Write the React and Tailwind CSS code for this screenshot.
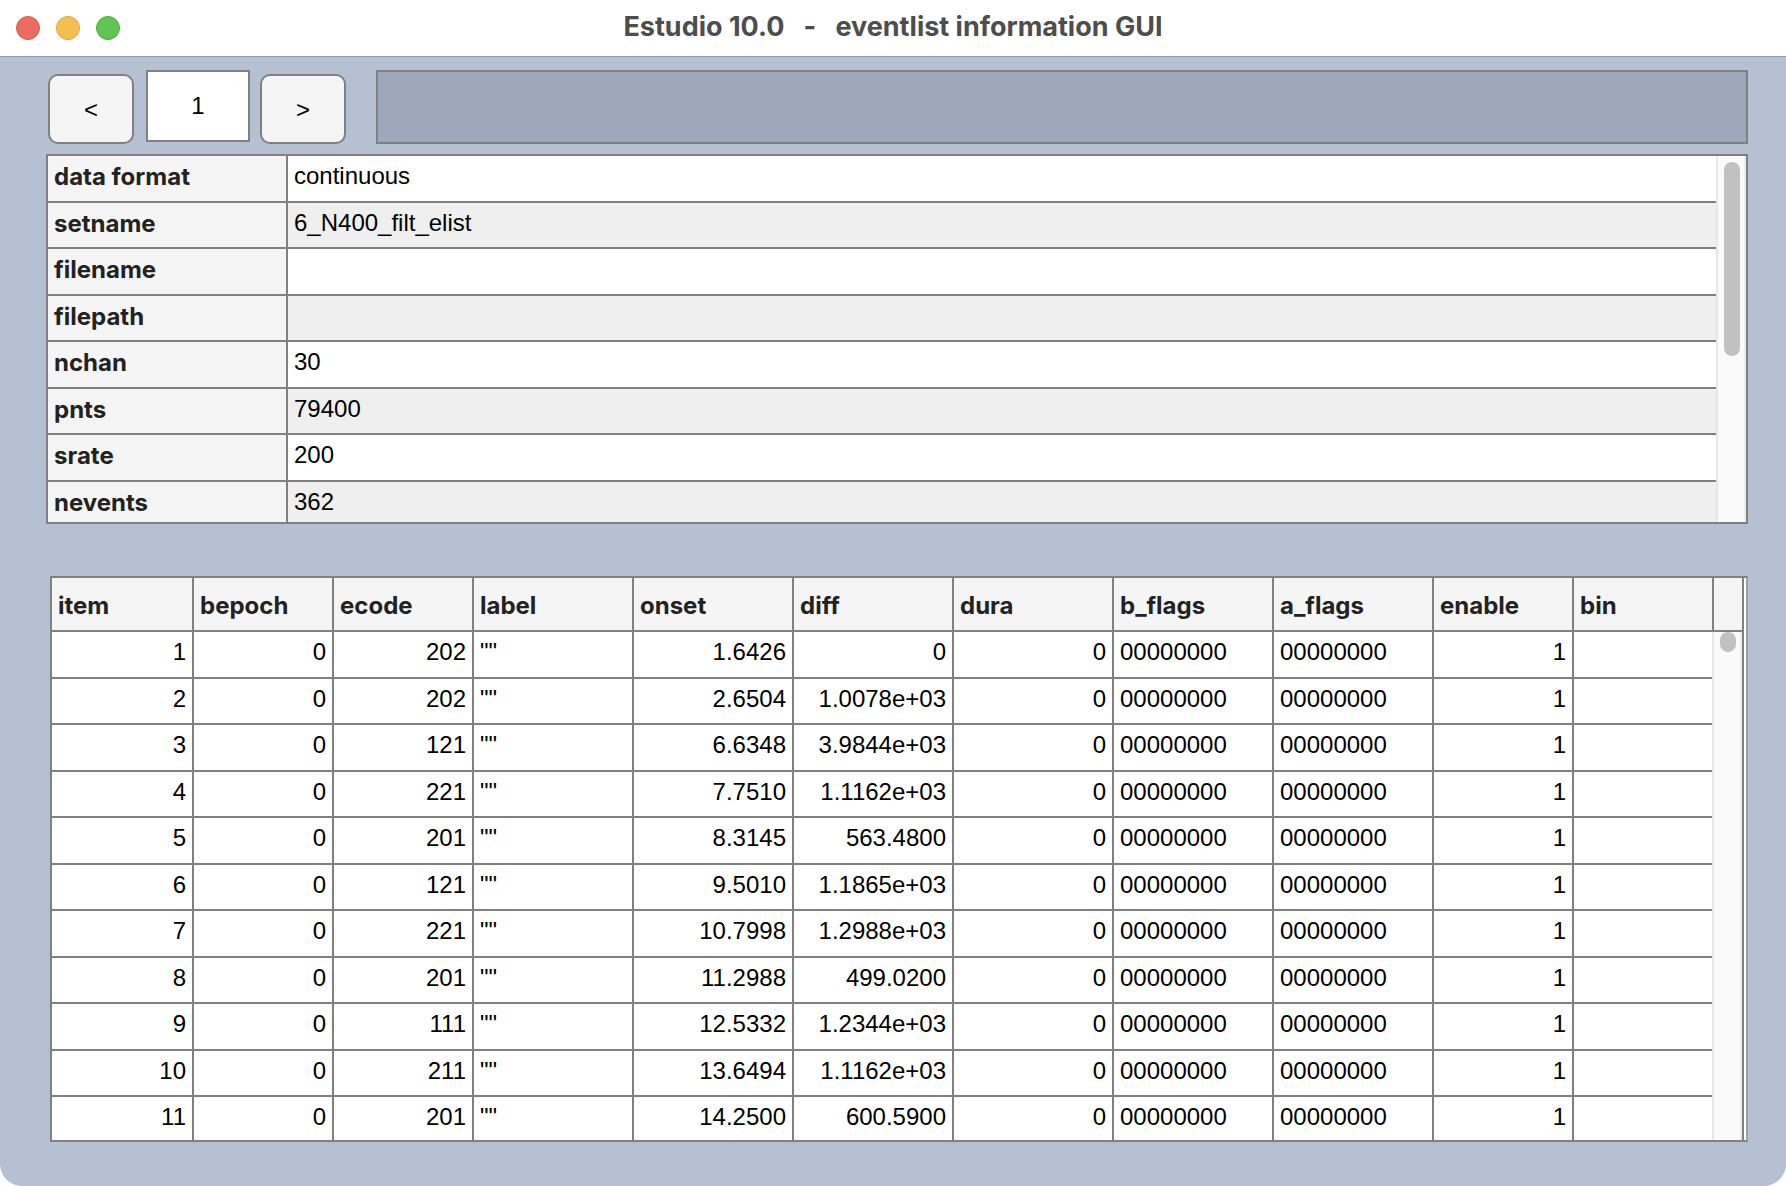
import { useState } from 'react';

const info = [
  ['data format', 'continuous'],
  ['setname', '6_N400_filt_elist'],
  ['filename', ''],
  ['filepath', ''],
  ['nchan', '30'],
  ['pnts', '79400'],
  ['srate', '200'],
  ['nevents', '362'],
];

const columns = [
  { name: 'item', col: 'w-[142px]', align: 'text-right' },
  { name: 'bepoch', col: 'w-[140px]', align: 'text-right' },
  { name: 'ecode', col: 'w-[140px]', align: 'text-right' },
  { name: 'label', col: 'w-[160px]', align: 'text-left' },
  { name: 'onset', col: 'w-[160px]', align: 'text-right' },
  { name: 'diff', col: 'w-[160px]', align: 'text-right' },
  { name: 'dura', col: 'w-[160px]', align: 'text-right' },
  { name: 'b_flags', col: 'w-[160px]', align: 'text-left' },
  { name: 'a_flags', col: 'w-[160px]', align: 'text-left' },
  { name: 'enable', col: 'w-[140px]', align: 'text-right' },
  { name: 'bin', col: '', align: 'text-left' },
];

const events = [
  ['202', '1.6426', '0'],
  ['202', '2.6504', '1.0078e+03'],
  ['121', '6.6348', '3.9844e+03'],
  ['221', '7.7510', '1.1162e+03'],
  ['201', '8.3145', '563.4800'],
  ['121', '9.5010', '1.1865e+03'],
  ['221', '10.7998', '1.2988e+03'],
  ['201', '11.2988', '499.0200'],
  ['111', '12.5332', '1.2344e+03'],
  ['211', '13.6494', '1.1162e+03'],
  ['201', '14.2500', '600.5900'],
].map(([ecode, onset, diff], i) => [
  String(i + 1), '0', ecode, '""', onset, diff, '0', '00000000', '00000000', '1', '',
]);

function TitleBar() {
  return (
    <header className="grid h-14 shrink-0 grid-cols-[1fr_auto_1fr] items-center bg-white px-4">
      <div className="flex gap-4">
        <span className="size-6 rounded-full border border-[#d65a4e] bg-[#ec6b60]" />
        <span className="size-6 rounded-full border border-[#dca443] bg-[#f5bf4f]" />
        <span className="size-6 rounded-full border border-[#52a842] bg-[#61c554]" />
      </div>
      <h1 className="whitespace-pre pb-0.5 font-['Inter',sans-serif] text-[27px] leading-8 font-bold text-[#4d4d4d]">
        Estudio 10.0   -   eventlist information GUI
      </h1>
    </header>
  );
}

function StepButton({ label, onClick, children }) {
  return (
    <button
      type="button"
      aria-label={label}
      onClick={onClick}
      className="mt-1 h-[70px] w-[86px] rounded-[10px] border-2 border-[#808080] bg-[#f5f5f5] pt-0.5"
    >
      {children}
    </button>
  );
}

function Toolbar() {
  const [set, setSet] = useState(1);

  return (
    <div className="flex h-[74px] shrink-0 items-start pl-0.5">
      <StepButton label="Previous" onClick={() => setSet(Math.max(1, set - 1))}>
        &lt;
      </StepButton>
      <input
        type="text"
        aria-label="Set"
        value={set}
        onChange={(e) => setSet(Number(e.target.value) || 1)}
        className="mr-2.5 ml-3 h-[72px] w-[104px] border-2 border-[#808080] bg-white text-center"
      />
      <StepButton label="Next" onClick={() => setSet(set + 1)}>
        &gt;
      </StepButton>
      <div className="ml-[30px] h-full flex-1 border-2 border-[#808080] bg-[#9da8ba]" />
    </div>
  );
}

function ScrollLane({ children }) {
  return (
    <div className="flex w-[30px] shrink-0 border-x-2 border-l-[#e8e8e8] border-r-[#ededed] bg-[#fafafa] pl-1.5">
      {children}
    </div>
  );
}

function InfoTable() {
  return (
    <section className="mt-2.5 flex h-[370px] shrink-0 border-2 border-[#808080] bg-white">
      <div className="flex-1 overflow-y-auto [scrollbar-width:none]">
        <table className="w-full table-fixed border-separate border-spacing-0">
          <colgroup>
            <col className="w-[240px]" />
            <col />
          </colgroup>
          <tbody>
            {info.map(([name, value]) => (
              <tr key={name} className="odd:h-[47px] even:h-[46px] even:bg-[#efefef]">
                <th
                  scope="row"
                  className="border-r-2 border-b-2 border-[#808080] bg-[#f5f5f5] px-1.5 pt-[9px] text-left align-top font-['Inter',sans-serif] font-bold text-[#222222]"
                >
                  {name}
                </th>
                <td className="border-b-2 border-[#808080] px-1.5 pt-2 align-top">{value}</td>
              </tr>
            ))}
          </tbody>
        </table>
      </div>
      <ScrollLane>
        <div className="mt-1.5 h-[194px] w-4 rounded-full bg-[#c1c1c1]" />
      </ScrollLane>
    </section>
  );
}

function Columns() {
  return (
    <colgroup>
      {columns.map((c) => (
        <col key={c.name} className={c.col} />
      ))}
    </colgroup>
  );
}

function EventTable() {
  return (
    <section className="mt-[52px] ml-1 flex min-h-0 flex-1 border-y-2 border-r-2 border-y-[#808080] border-r-[#a0a0a0] bg-white">
      <div className="mr-0.5 flex min-w-0 flex-1 border-x-2 border-[#808080]">
        <div className="min-w-0 flex-1 overflow-y-auto [scrollbar-width:none]">
          <table className="w-full table-fixed border-separate border-spacing-0">
            <Columns />
            <thead className="sticky top-0">
              <tr className="h-[54px]">
                {columns.map((c) => (
                  <th
                    key={c.name}
                    scope="col"
                    className="border-r-2 border-b-2 border-[#808080] bg-[#f5f5f5] px-1.5 pt-4 text-left align-top font-['Inter',sans-serif] font-bold text-[#222222] last:border-r-0"
                  >
                    {c.name}
                  </th>
                ))}
              </tr>
            </thead>
            <tbody>
              {events.map((row) => (
                <tr key={row[0]} className="odd:h-[47px] even:h-[46px]">
                  {row.map((value, i) => (
                    <td
                      key={columns[i].name}
                      className={`border-r-2 border-b-2 border-[#808080] px-1.5 pt-2 align-top last:border-r-0 ${columns[i].align}`}
                    >
                      {value}
                    </td>
                  ))}
                </tr>
              ))}
            </tbody>
          </table>
        </div>
        <div className="flex w-[30px] shrink-0 flex-col">
          <div className="h-[54px] border-b-2 border-l-2 border-[#808080] bg-[#f5f5f5]" />
          <div className="flex flex-1">
            <ScrollLane>
              <div className="h-5 w-4 rounded-full bg-[#c1c1c1]" />
            </ScrollLane>
          </div>
        </div>
      </div>
    </section>
  );
}

export default function App() {
  return (
    <div className="h-screen bg-white">
      <div className="flex h-full flex-col overflow-hidden rounded-b-[22px] bg-[#b5c0d3] font-['Liberation_Sans',sans-serif] text-[24px] leading-6 text-black">
        <TitleBar />
        <main className="flex min-h-0 flex-1 flex-col border-t border-[#929db5] pt-[13px] pr-[38px] pb-11 pl-[46px]">
          <Toolbar />
          <InfoTable />
          <EventTable />
        </main>
      </div>
    </div>
  );
}
